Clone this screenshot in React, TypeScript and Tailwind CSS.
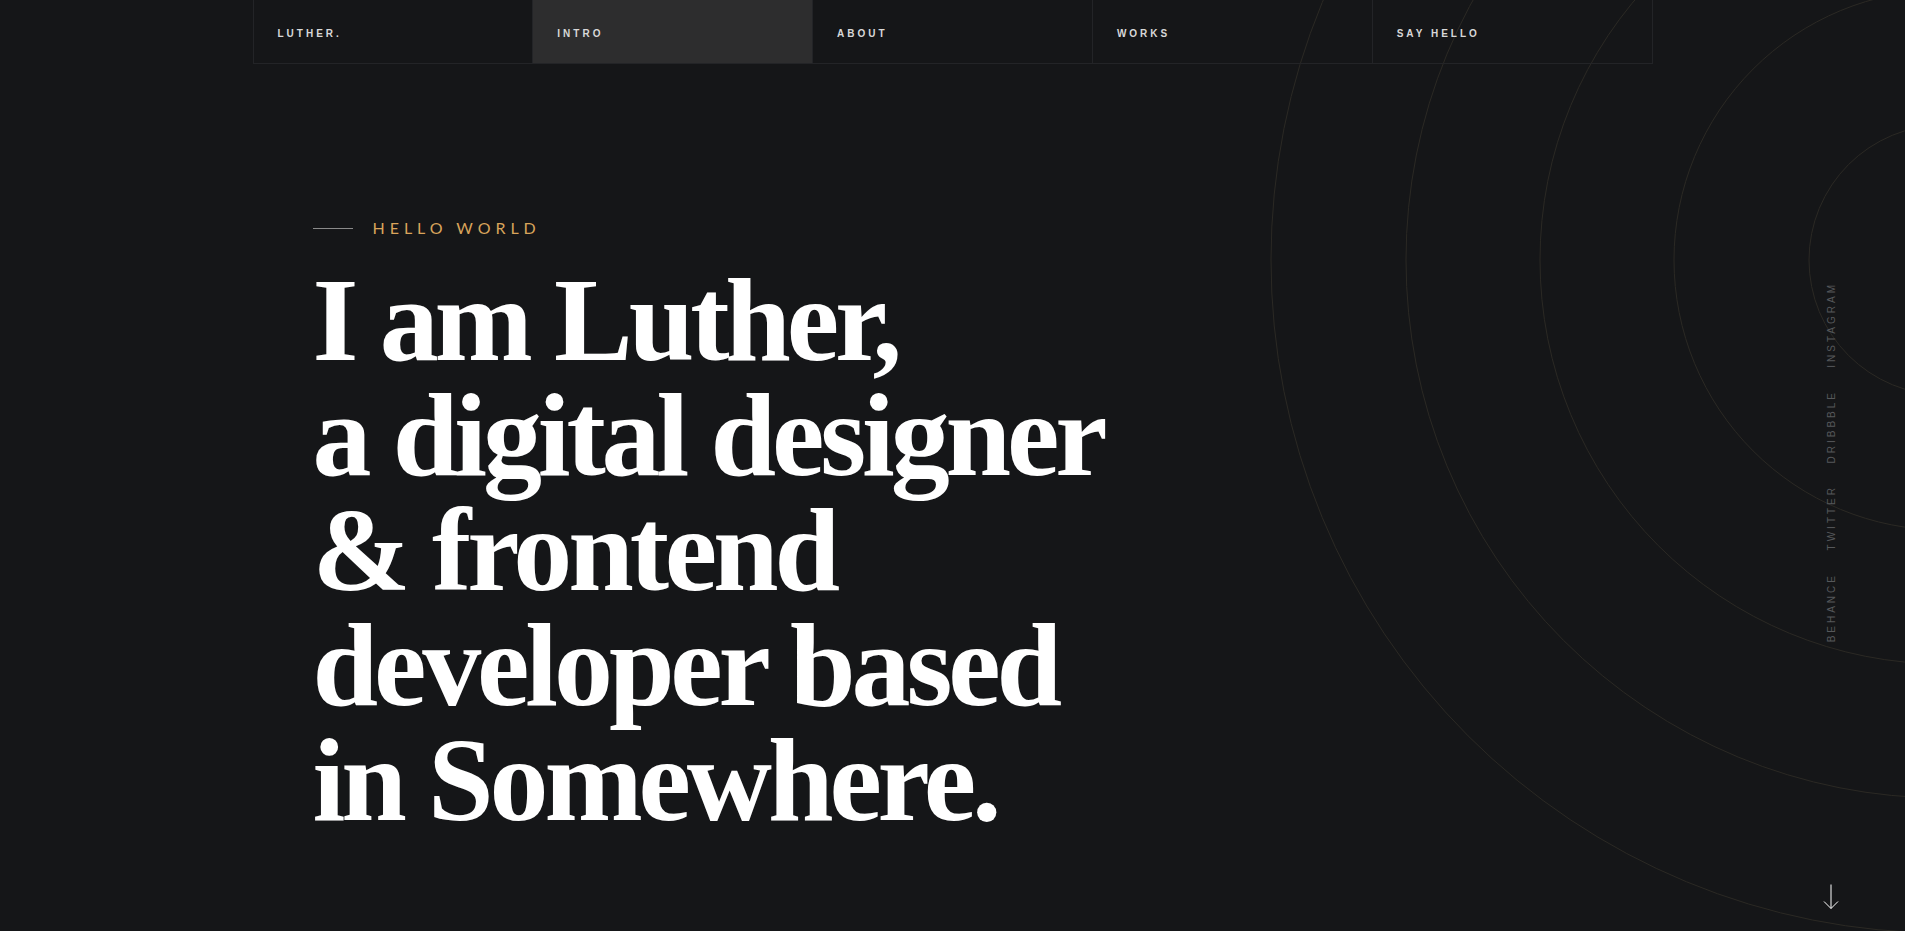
const navItems = ['Luther.', 'Intro', 'About', 'Works', 'Say Hello'];
const socials = ['Instagram', 'Dribbble', 'Twitter', 'Behance'];
const rings = [135, 270, 404, 538, 673];

export default function App() {
  return (
    <div className="relative h-[931px] w-full overflow-hidden bg-[#151618] font-['Liberation_Sans',sans-serif]">
      {/* background rings */}
      <svg className="pointer-events-none absolute inset-0" width="1905" height="931">
        {rings.map((r) => (
          <circle key={r} cx="1944" cy="260" r={r} fill="none" stroke="#2b2924" strokeWidth="1" />
        ))}
      </svg>

      {/* Nav */}
      <nav className="relative mx-auto flex w-[1400px] border-x border-b border-[#232427]">
        {navItems.map((item, i) => (
          <a
            key={item}
            href="#"
            className={`flex h-[63px] flex-1 items-center px-6 pt-[3px] text-[10px] font-bold uppercase tracking-[0.3em] text-[#d8d8d8] ${
              i > 0 ? 'border-l border-[#232427]' : ''
            } ${i === 1 ? 'bg-[#2d2d2e]' : ''}`}
          >
            {item}
          </a>
        ))}
      </nav>

      {/* Hero */}
      <section className="relative mx-auto w-[1400px] pl-[60px] pt-[154px]">
        <div className="flex h-5 items-center gap-5">
          <span className="h-px w-10 bg-[#8a8a8a]" />
          <span className="font-['Lato',sans-serif] text-[16px] uppercase tracking-[0.31em] text-[#d9a45b]">
            Hello World
          </span>
        </div>
        <h1 className="mt-[25px] font-['Liberation_Serif',serif] text-[118px] font-bold leading-[115px] tracking-[-0.035em] text-white">
          I am Luther,
          <br />
          a digital designer
          <br />
          &amp; frontend
          <br />
          developer based
          <br />
          in Somewhere.
        </h1>
      </section>

      {/* Social links */}
      <div className="absolute left-[1824px] top-[282px] flex flex-col items-center gap-[22px]">
        {socials.map((s) => (
          <a key={s} href="#" className="[writing-mode:vertical-rl] rotate-180 text-[10px] uppercase tracking-[0.3em] text-[#56585b]">
            {s}
          </a>
        ))}
      </div>

      {/* Scroll arrow */}
      <svg className="absolute left-[1823px] top-[884px]" width="16" height="26" viewBox="0 0 16 26" fill="none" stroke="#ffffff" strokeWidth="1">
        <path d="M8 0.5V24.5" />
        <path d="M1 17.5L8 24.5L15 17.5" />
      </svg>
    </div>
  );
}
